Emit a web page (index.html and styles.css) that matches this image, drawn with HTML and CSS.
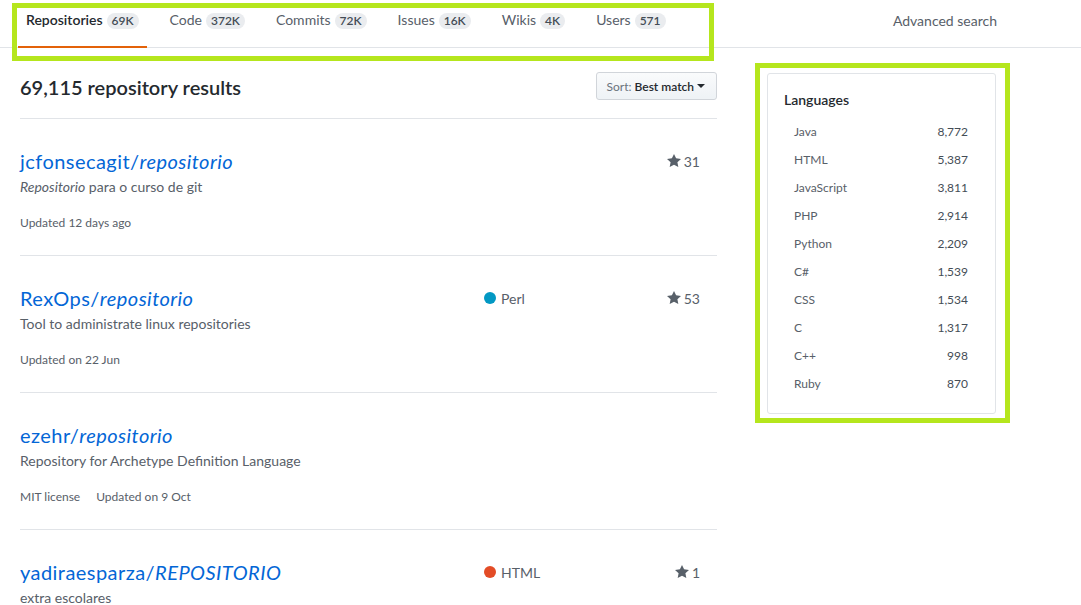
FILE: index.html
```html
<!DOCTYPE html>
<html lang="en">
<head>
<meta charset="utf-8">
<title>Search results</title>
<link rel="stylesheet" href="styles.css">
</head>
<body>
<header class="search-nav">
  <nav class="tabs">
    <a class="tab selected" href="#">Repositories<span class="counter">69K</span></a>
    <a class="tab" href="#">Code<span class="counter">372K</span></a>
    <a class="tab" href="#">Commits<span class="counter">72K</span></a>
    <a class="tab" href="#">Issues<span class="counter">16K</span></a>
    <a class="tab" href="#">Wikis<span class="counter">4K</span></a>
    <a class="tab" href="#">Users<span class="counter">571</span></a>
  </nav>
  <a class="advanced" href="#">Advanced search</a>
</header>

<div class="layout">
  <main class="results">
    <div class="results-head">
      <h3 class="results-title">69,115 repository results</h3>
      <button class="sort-btn" type="button"><span class="sort-label">Sort:</span> <span class="sort-value">Best match</span><span class="caret"></span></button>
    </div>

    <ul class="repo-list">
      <li class="repo">
        <div class="repo-main">
          <a class="repo-name" href="#">jcfonsecagit/<em>repositorio</em></a>
          <p class="repo-desc"><em>Repositorio</em> para o curso de git</p>
          <div class="repo-meta"><span>Updated 12 days ago</span></div>
        </div>
        <div class="repo-lang"></div>
        <div class="repo-stars"><svg class="star" viewBox="0 0 14 16" width="14" height="16"><path d="M14 6l-4.9-.64L7 1 4.9 5.36 0 6l3.6 3.26L2.67 14 7 11.67 11.33 14l-.93-4.74L14 6z"/></svg>31</div>
      </li>
      <li class="repo">
        <div class="repo-main">
          <a class="repo-name" href="#">RexOps/<em>repositorio</em></a>
          <p class="repo-desc">Tool to administrate linux repositories</p>
          <div class="repo-meta"><span>Updated on 22 Jun</span></div>
        </div>
        <div class="repo-lang"><span class="lang-dot perl"></span>Perl</div>
        <div class="repo-stars"><svg class="star" viewBox="0 0 14 16" width="14" height="16"><path d="M14 6l-4.9-.64L7 1 4.9 5.36 0 6l3.6 3.26L2.67 14 7 11.67 11.33 14l-.93-4.74L14 6z"/></svg>53</div>
      </li>
      <li class="repo">
        <div class="repo-main">
          <a class="repo-name" href="#">ezehr/<em>repositorio</em></a>
          <p class="repo-desc">Repository for Archetype Definition Language</p>
          <div class="repo-meta"><span class="meta-item">MIT license</span><span>Updated on 9 Oct</span></div>
        </div>
        <div class="repo-lang"></div>
        <div class="repo-stars"></div>
      </li>
      <li class="repo">
        <div class="repo-main">
          <a class="repo-name" href="#">yadiraesparza/<em>REPOSITORIO</em></a>
          <p class="repo-desc">extra escolares</p>
          <div class="repo-meta"><span>Updated on 3 Oct</span></div>
        </div>
        <div class="repo-lang"><span class="lang-dot html"></span>HTML</div>
        <div class="repo-stars"><svg class="star" viewBox="0 0 14 16" width="14" height="16"><path d="M14 6l-4.9-.64L7 1 4.9 5.36 0 6l3.6 3.26L2.67 14 7 11.67 11.33 14l-.93-4.74L14 6z"/></svg>1</div>
      </li>
    </ul>
  </main>

  <aside class="sidebar">
    <div class="card">
      <h4 class="card-title">Languages</h4>
      <ul class="lang-list">
        <li class="lang-row"><span>Java</span><span class="lang-count">8,772</span></li>
        <li class="lang-row"><span>HTML</span><span class="lang-count">5,387</span></li>
        <li class="lang-row"><span>JavaScript</span><span class="lang-count">3,811</span></li>
        <li class="lang-row"><span>PHP</span><span class="lang-count">2,914</span></li>
        <li class="lang-row"><span>Python</span><span class="lang-count">2,209</span></li>
        <li class="lang-row"><span>C#</span><span class="lang-count">1,539</span></li>
        <li class="lang-row"><span>CSS</span><span class="lang-count">1,534</span></li>
        <li class="lang-row"><span>C</span><span class="lang-count">1,317</span></li>
        <li class="lang-row"><span>C++</span><span class="lang-count">998</span></li>
        <li class="lang-row"><span>Ruby</span><span class="lang-count">870</span></li>
      </ul>
    </div>
  </aside>
</div>

<div class="callout callout-tabs"></div>
<div class="callout callout-langs"></div>
</body>
</html>
```

FILE: styles.css
```css
* { box-sizing: border-box; }

html, body {
  margin: 0;
  overflow: hidden;
}

body {
  position: relative;
  height: 605px;
  background: #fff;
  color: #24292e;
  font-family: "Lato", "Liberation Sans", Arial, sans-serif;
  font-size: 14px;
  line-height: 1.5;
}

a { text-decoration: none; }

/* ---------- top nav ---------- */
.search-nav {
  display: flex;
  justify-content: space-between;
  align-items: flex-start;
  height: 48px;
  padding: 0 84px 0 18px;
  border-bottom: 1px solid #e1e4e8;
}

.tabs {
  display: flex;
  gap: 15px;
}

.tab {
  display: block;
  height: 48px;
  padding: 9px 8px 0;
  line-height: 21px;
  font-size: 14px;
  color: #586069;
  border-bottom: 2px solid transparent;
}

.tab.selected {
  color: #24292e;
  font-weight: 600;
  border-bottom-color: #e36209;
}

.counter {
  display: inline-block;
  margin-left: 4px;
  padding: 2px 5px;
  font-size: 12px;
  font-weight: 600;
  line-height: 12px;
  color: #444d56;
  background: #eaecef;
  border-radius: 20px;
}

.advanced {
  display: block;
  padding-top: 10px;
  line-height: 21px;
  color: #586069;
  font-size: 14px;
}

/* ---------- layout ---------- */
.layout {
  display: flex;
  padding: 24px 0 0 20px;
}

.results {
  width: 697px;
  flex: none;
}

.results-head {
  display: flex;
  justify-content: space-between;
  align-items: flex-start;
  padding-bottom: 16px;
  border-bottom: 1px solid #e1e4e8;
}

.results-title {
  margin: 0;
  font-size: 20px;
  font-weight: 600;
  line-height: 30px;
}

.sort-btn {
  display: flex;
  align-items: center;
  height: 28px;
  padding: 0 11px 0 10px;
  font-family: inherit;
  font-size: 12px;
  color: #24292e;
  background: linear-gradient(#fafbfc, #eff3f6 90%);
  border: 1px solid #d1d5da;
  border-radius: 3px;
}

.sort-label { color: #6a737d; margin-right: 3px; }
.sort-value { font-weight: 600; }

.caret {
  width: 0;
  height: 0;
  margin-left: 3px;
  border-style: solid;
  border-width: 4px 4px 0;
  border-color: #24292e transparent transparent;
}

/* ---------- repo list ---------- */
.repo-list {
  list-style: none;
  margin: 0;
  padding: 0;
}

.repo {
  display: flex;
  padding: 29px 0 23px;
  border-bottom: 1px solid #e1e4e8;
}

.repo-main { width: 464px; flex: none; }

.repo-name {
  display: block;
  font-size: 20px;
  line-height: 26px;
  letter-spacing: 0.45px;
  color: #0366d6;
}

.repo-desc {
  margin: 1px 0 0;
  font-size: 14px;
  line-height: 24px;
  color: #586069;
}

.repo-meta {
  margin-top: 15px;
  font-size: 12px;
  line-height: 18px;
  color: #586069;
}

.meta-item { margin-right: 16px; }

.repo-lang {
  width: 117px;
  flex: none;
  display: flex;
  align-items: center;
  height: 26px;
  font-size: 14px;
  color: #586069;
}

.lang-dot {
  width: 12px;
  height: 12px;
  margin-right: 5px;
  border-radius: 50%;
}
.lang-dot.perl { background: #0298c3; }
.lang-dot.html { background: #e34c26; }

.repo-stars {
  flex: 1;
  display: flex;
  justify-content: flex-end;
  align-items: center;
  height: 26px;
  padding-right: 17px;
  font-size: 14px;
  color: #586069;
}

.star {
  fill: #586069;
  margin-right: 3px;
}

/* ---------- sidebar ---------- */
.sidebar {
  width: 229px;
  flex: none;
  margin-left: 50px;
  margin-top: 1px;
}

.card {
  padding: 16px 27px 16px 16px;
  border: 1px solid #e1e4e8;
  border-radius: 3px;
}

.card-title {
  margin: 0;
  font-size: 14px;
  font-weight: 600;
  line-height: 20px;
}

.lang-list {
  list-style: none;
  margin: 8px 0 -1px;
  padding: 0 0 0 10px;
}

.lang-row {
  display: flex;
  justify-content: space-between;
  line-height: 28px;
  font-size: 12px;
  color: #586069;
}

.lang-count { color: #444d56; }

/* ---------- annotation callouts ---------- */
.callout {
  position: absolute;
  border: 5px solid #b5e61d;
  pointer-events: none;
}

.callout-tabs {
  left: 12px;
  top: 3px;
  width: 702px;
  height: 58px;
}

.callout-langs {
  left: 755px;
  top: 63px;
  width: 255px;
  height: 360px;
}
```
